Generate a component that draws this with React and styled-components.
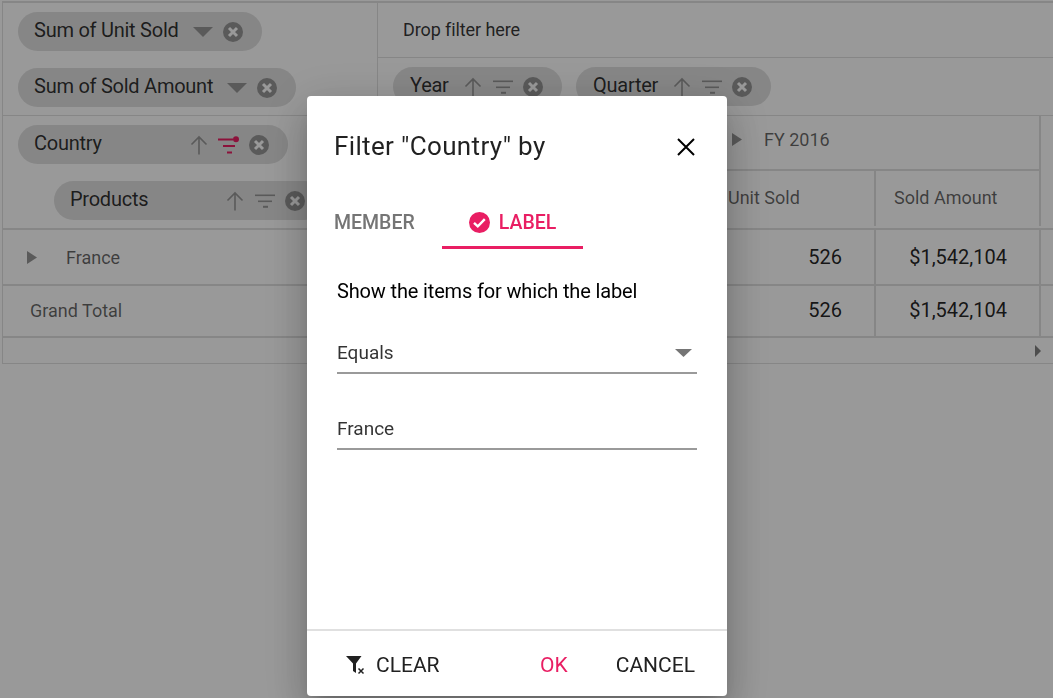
import React from "react";
import styled, { createGlobalStyle } from "styled-components";

const ACCENT = "#e91e63";
const FONT = `Roboto, "Liberation Sans", sans-serif`;

const GlobalStyle = createGlobalStyle`
  html, body {
    margin: 0;
    padding: 0;
    height: 100%;
    background: #fff;
    overflow: hidden;
    font-family: ${FONT};
  }
`;

const RemoveIcon = () => (
  <svg width="20" height="20" viewBox="0 0 20 20">
    <circle cx="10" cy="10" r="10" fill="#969696" />
    <path d="M6 6 14 14M14 6 6 14" stroke="#fff" strokeWidth="3" fill="none" />
  </svg>
);

const SortIcon = () => (
  <svg width="18" height="20" viewBox="0 0 18 20">
    <path d="M9 19.5V2M1.5 9.5 9 2l7.5 7.5" stroke="#969696" strokeWidth="1.6" fill="none" />
  </svg>
);

const FilterIcon = ({ active }) =>
  active ? (
    <svg width="21" height="18" viewBox="0 0 21 18">
      <g fill={ACCENT}>
        <rect x="0" y="2.5" width="15" height="2" />
        <rect x="5" y="9" width="12" height="2" />
        <rect x="9" y="15.5" width="5" height="2" />
        <circle cx="18" cy="3.2" r="3" />
      </g>
    </svg>
  ) : (
    <svg width="21" height="18" viewBox="0 0 21 18">
      <g fill="#969696">
        <rect x="1" y="2.5" width="20" height="1.6" />
        <rect x="4" y="8.5" width="14" height="1.6" />
        <rect x="9" y="13.8" width="5" height="2" />
      </g>
    </svg>
  );

const Caret = ({ color = "#969696", width = 20, height = 10 }) => (
  <svg width={width} height={height} viewBox="0 0 20 10" preserveAspectRatio="none">
    <path d="M0 0h20L10 10z" fill={color} />
  </svg>
);

const RightCaret = ({ width = 10, height = 13, color = "#969696" }) => (
  <svg width={width} height={height} viewBox="0 0 10 12" preserveAspectRatio="none">
    <path d="M0 0l10 6-10 6z" fill={color} />
  </svg>
);

const Chip = ({ label, width, caret, sort, filter, filterActive, indent, inset }) => (
  <ChipBox $width={width} $indent={indent} $inset={inset}>
    <ChipLabel>{label}</ChipLabel>
    <ChipIcons>
      {caret && <Caret />}
      {sort && <SortIcon />}
      {filter && <FilterIcon active={filterActive} />}
      <RemoveIcon />
    </ChipIcons>
  </ChipBox>
);

const App = () => {
  return (
    <>
      <GlobalStyle />
      <Frame>
        <TopRow>
          <ValuesCell>
            <Chip label="Sum of Unit Sold" width={244} caret />
            <Chip label="Sum of Sold Amount" width={278} caret />
          </ValuesCell>
          <TopRight>
            <DropFilter>Drop filter here</DropFilter>
            <ColumnChips>
              <Chip label="Year" width={169} inset={17} sort filter />
              <Chip label="Quarter" width={195} inset={17} sort filter />
            </ColumnChips>
          </TopRight>
        </TopRow>
        <HeadRow>
          <RowsCell>
            <Chip label="Country" width={270} sort filter filterActive />
            <Chip label="Products" width={270} indent={36} sort filter />
          </RowsCell>
          <HeadRight>
            <YearHead>
              <RightCaret />
              <span>FY 2016</span>
            </YearHead>
            <MeasureRow>
              <MeasureCell $width={165} $pad={19}>Unit Sold</MeasureCell>
              <MeasureCell $width={165} $pad={18} $line>Sold Amount</MeasureCell>
              <MeasureCell $line />
            </MeasureRow>
          </HeadRight>
        </HeadRow>
        <BodyRow $height={56}>
          <RowHead $pad={24}>
            <RightCaret />
            <FranceLabel>France</FranceLabel>
          </RowHead>
          <Cells>
            <ValueCell>526</ValueCell>
            <ValueCell $line>$1,542,104</ValueCell>
            <LastCell />
          </Cells>
        </BodyRow>
        <BodyRow $height={52} $lift={2}>
          <RowHead $pad={27}>Grand Total</RowHead>
          <Cells>
            <ValueCell>526</ValueCell>
            <ValueCell $line>$1,542,104</ValueCell>
            <LastCell />
          </Cells>
        </BodyRow>
        <ScrollRow>
          <RightCaret width={6} height={12} color="#808080" />
        </ScrollRow>
      </Frame>
      <Backdrop />
      <Dialog>
        <DialogHeader>
          <DialogTitle>Filter "Country" by</DialogTitle>
          <CloseButton aria-label="Close">
            <svg width="18" height="18" viewBox="0 0 18 18">
              <path d="M1 1l16 16M17 1 1 17" stroke="#000" strokeWidth="2" fill="none" />
            </svg>
          </CloseButton>
        </DialogHeader>
        <Tabs>
          <Tab>MEMBER</Tab>
          <Tab $active>
            <svg width="21" height="21" viewBox="0 0 21 21">
              <circle cx="10.5" cy="10.5" r="10.5" fill={ACCENT} />
              <path d="M5 10.8l3.8 3.6 7-7.2" stroke="#fff" strokeWidth="2.4" fill="none" />
            </svg>
            LABEL
          </Tab>
        </Tabs>
        <DialogBody>
          <Prompt>Show the items for which the label</Prompt>
          <Field>
            <span>Equals</span>
            <Caret color="#757575" width={17} height={8} />
          </Field>
          <Field $spaced>
            <span>France</span>
          </Field>
        </DialogBody>
        <DialogFooter>
          <ClearButton>
            <svg width="20" height="20" viewBox="0 0 20 20">
              <path d="M0 1h15.5L10 8.5V18l-3-2V8.5z" fill="#212121" />
              <path d="M12.5 13.5l5 5M17.5 13.5l-5 5" stroke="#212121" strokeWidth="1.5" fill="none" />
            </svg>
            CLEAR
          </ClearButton>
          <FooterButton $primary>OK</FooterButton>
          <FooterButton>CANCEL</FooterButton>
        </DialogFooter>
      </Dialog>
    </>
  );
};

const Frame = styled.div`
  margin: 1px 0 0 2px;
  width: 1051px;
  box-sizing: border-box;
  border: solid #e0e0e0;
  border-width: 2px 0 1px 1px;
  color: rgba(0, 0, 0, 0.8);
`;

const TopRow = styled.div`
  display: flex;
  height: 112px;
  border-bottom: 1px solid #e0e0e0;
`;

const ValuesCell = styled.div`
  width: 375px;
  flex: none;
  box-sizing: border-box;
  padding: 9px 0 0 15px;
  display: flex;
  flex-direction: column;
  gap: 17px;
  border-right: 1px solid #e0e0e0;
`;

const TopRight = styled.div`
  flex: 1;
  display: flex;
  flex-direction: column;
`;

const DropFilter = styled.div`
  height: 55px;
  flex: none;
  box-sizing: border-box;
  display: flex;
  align-items: center;
  padding: 0 0 1px 25px;
  font-size: 18px;
  letter-spacing: -0.1px;
  border-bottom: 1px solid #e0e0e0;
`;

const ColumnChips = styled.div`
  display: flex;
  gap: 14px;
  padding: 9px 0 0 15px;
`;

const ChipBox = styled.div`
  width: ${({ $width }) => $width}px;
  margin-left: ${({ $indent }) => $indent || 0}px;
  height: 39px;
  flex: none;
  box-sizing: border-box;
  padding: 0 19px 3px ${({ $inset }) => $inset || 16}px;
  display: flex;
  align-items: center;
  justify-content: space-between;
  background: #e0e0e0;
  border-radius: 20px;
`;

const ChipLabel = styled.span`
  font-size: 20px;
  letter-spacing: -0.25px;
  white-space: nowrap;
`;

const ChipIcons = styled.span`
  display: flex;
  align-items: center;
  gap: 10px;
  margin-bottom: -3px;
`;

const HeadRow = styled.div`
  display: flex;
  height: 112px;
  border-bottom: 2px solid #e0e0e0;
`;

const RowsCell = styled.div`
  width: 375px;
  flex: none;
  box-sizing: border-box;
  padding: 9px 0 0 15px;
  display: flex;
  flex-direction: column;
  gap: 17px;
`;

const HeadRight = styled.div`
  flex: 1;
  display: flex;
  flex-direction: column;
  padding-left: 331px;
`;

const YearHead = styled.div`
  height: 53px;
  flex: none;
  display: flex;
  align-items: center;
  gap: 22px;
  padding-left: 23px;
  margin-right: 12px;
  font-size: 18px;
  color: rgba(0, 0, 0, 0.6);
  border-bottom: 2px solid #e0e0e0;
  border-right: 2px solid #e0e0e0;

  span,
  svg {
    margin-bottom: 6px;
  }
`;

const MeasureRow = styled.div`
  flex: 1;
  display: flex;
`;

const MeasureCell = styled.div`
  ${({ $width }) => ($width ? `width: ${$width}px; flex: none;` : "flex: 1;")}
  box-sizing: border-box;
  display: flex;
  align-items: center;
  margin-bottom: 2px;
  padding: 0 0 3px ${({ $pad }) => $pad || 0}px;
  font-size: 18px;
  color: rgba(0, 0, 0, 0.6);
  border-left: ${({ $line }) => ($line ? "2px solid #e0e0e0" : "none")};
`;

const BodyRow = styled.div`
  display: flex;
  height: ${({ $height }) => $height}px;
  box-sizing: border-box;
  border-bottom: 2px solid #e0e0e0;

  > div > div,
  > div:first-child {
    padding-bottom: ${({ $lift }) => $lift || 0}px;
  }
`;

const RowHead = styled.div`
  width: 706px;
  flex: none;
  box-sizing: border-box;
  padding-left: ${({ $pad }) => $pad}px;
  display: flex;
  align-items: center;
  font-size: 18px;
  color: rgba(0, 0, 0, 0.6);
`;

const FranceLabel = styled.span`
  margin-left: 29px;
`;

const Cells = styled.div`
  flex: 1;
  display: flex;
`;

const ValueCell = styled.div`
  width: 165px;
  flex: none;
  box-sizing: border-box;
  display: flex;
  align-items: center;
  justify-content: flex-end;
  padding-right: 32px;
  font-size: 20px;
  font-weight: 400;
  color: rgba(0, 0, 0, 0.87);
  border-left: ${({ $line }) => ($line ? "2px solid #e0e0e0" : "none")};
`;

const LastCell = styled.div`
  flex: 1;
  border-left: 2px solid #e0e0e0;
`;

const ScrollRow = styled.div`
  height: 25px;
  display: flex;
  align-items: center;
  justify-content: flex-end;
  padding-right: 12px;
`;

const Backdrop = styled.div`
  position: fixed;
  inset: 0;
  background: rgba(0, 0, 0, 0.4);
`;

const Dialog = styled.div`
  position: fixed;
  left: 307px;
  top: 96px;
  width: 420px;
  height: 600px;
  display: flex;
  flex-direction: column;
  background: #fff;
  border-radius: 4px;
  box-shadow: 0 11px 15px -7px rgba(0, 0, 0, 0.2), 0 24px 38px 3px rgba(0, 0, 0, 0.14),
    0 9px 46px 8px rgba(0, 0, 0, 0.12);
`;

const DialogHeader = styled.div`
  display: flex;
  align-items: center;
  justify-content: space-between;
  padding: 33px 32px 0 27px;
  height: 34px;
`;

const DialogTitle = styled.h2`
  margin: 0;
  font-size: 26px;
  font-weight: 400;
  letter-spacing: 0.35px;
  color: rgba(0, 0, 0, 0.87);
`;

const CloseButton = styled.button`
  border: 0;
  background: none;
  padding: 0;
  margin-top: 2px;
  display: flex;
`;

const Tabs = styled.div`
  display: flex;
  margin: 36px 0 0 27px;
  gap: 27px;
`;

const Tab = styled.div`
  display: flex;
  align-items: center;
  gap: 9px;
  box-sizing: border-box;
  height: 50px;
  font-size: 19.5px;
  font-weight: 500;
  color: ${({ $active }) => ($active ? ACCENT : "#757575")};
  border-bottom: 3px solid ${({ $active }) => ($active ? ACCENT : "transparent")};
  ${({ $active }) => $active && "width: 141px; padding-left: 27px;"}
`;

const DialogBody = styled.div`
  flex: 1;
  padding: 30px 30px 0;
`;

const Prompt = styled.div`
  font-size: 20px;
  font-weight: 400;
  letter-spacing: -0.15px;
  color: #000;
  line-height: 24px;
`;

const Field = styled.div`
  margin-top: ${({ $spaced }) => ($spaced ? 35 : 30)}px;
  height: 41px;
  box-sizing: border-box;
  display: flex;
  align-items: center;
  justify-content: space-between;
  padding-right: 5px;
  font-size: 19px;
  color: rgba(0, 0, 0, 0.8);
  border-bottom: 2px solid #9a9a9a;
`;

const DialogFooter = styled.div`
  height: 67px;
  flex: none;
  box-sizing: border-box;
  display: flex;
  align-items: center;
  padding: 2px 32px 0 39px;
  gap: 48px;
  border-top: 2px solid #e0e0e0;
`;

const FooterButton = styled.button`
  border: 0;
  background: none;
  padding: 0;
  font-family: ${FONT};
  font-size: 21px;
  font-weight: 400;
  color: ${({ $primary }) => ($primary ? ACCENT : "#212121")};
`;

const ClearButton = styled(FooterButton)`
  margin-right: auto;
  display: flex;
  align-items: center;
  gap: 10px;
`;

export default App;
